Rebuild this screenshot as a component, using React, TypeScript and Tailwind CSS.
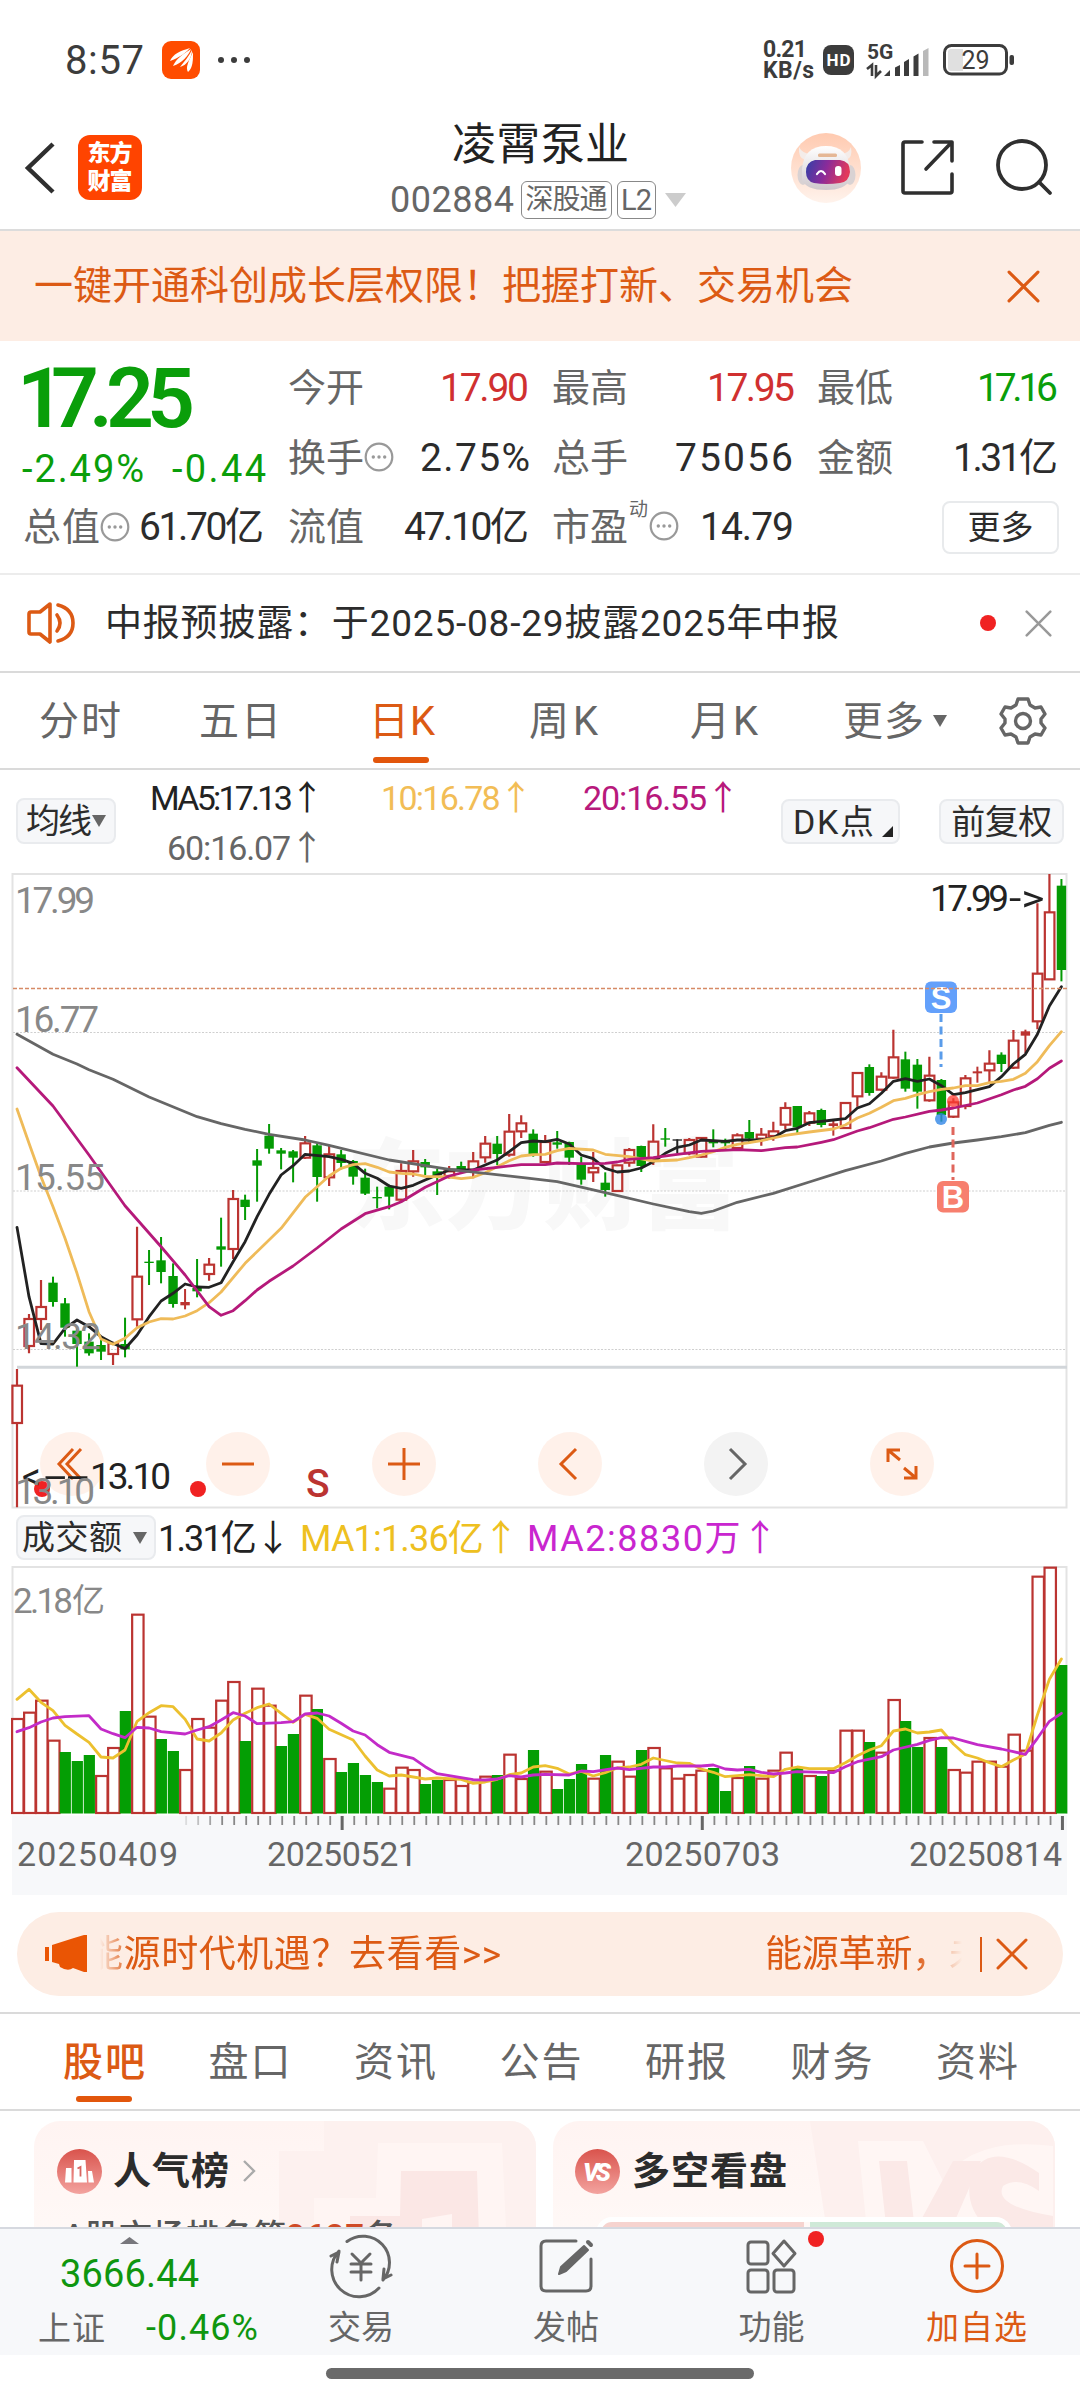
import { useLayoutEffect, useRef, type ReactNode } from "react";

/* ---------- shared helpers ---------- */

/** Single line of text whose tracking is adjusted so that it fills its box. */
function Fit({ className = "", children }: { className?: string; children: string }) {
  const box = useRef<HTMLSpanElement>(null);
  const inner = useRef<HTMLSpanElement>(null);
  useLayoutEffect(() => {
    if (!box.current || !inner.current) return;
    inner.current.style.letterSpacing = "0px";
    const natural = inner.current.getBoundingClientRect().width;
    const target = box.current.getBoundingClientRect().width;
    const gaps = Math.max(1, Array.from(children).length - 1);
    inner.current.style.letterSpacing = `${(target - natural) / gaps}px`;
  }, [children]);
  return (
    <span ref={box} className={`block shrink-0 whitespace-nowrap leading-none ${className}`}>
      <span ref={inner}>{children}</span>
    </span>
  );
}

function Cross({ className = "" }: { className?: string }) {
  return (
    <svg viewBox="0 0 32 32" fill="none" stroke="currentColor" strokeWidth="3" strokeLinecap="round" className={`shrink-0 ${className}`}>
      <path d="M2 2 30 30M30 2 2 30" />
    </svg>
  );
}

function InfoDot({ className = "" }: { className?: string }) {
  return (
    <svg viewBox="0 0 30 30" className={`h-[30px] w-[30px] shrink-0 ${className}`}>
      <circle cx="15" cy="15" r="13.3" fill="none" stroke="#999" strokeWidth="2.2" />
      <circle cx="9.3" cy="15" r="1.7" fill="#999" />
      <circle cx="15" cy="15" r="1.7" fill="#999" />
      <circle cx="20.7" cy="15" r="1.7" fill="#999" />
    </svg>
  );
}

function Caret({ className = "" }: { className?: string }) {
  return (
    <svg viewBox="0 0 14 12" preserveAspectRatio="none" fill="currentColor" className={`h-3 w-3.5 shrink-0 ${className}`}>
      <path d="M0 0H14L7 12Z" />
    </svg>
  );
}

/* ---------- status bar and title bar ---------- */

function StatusBar() {
  return (
    <div className="flex h-[120px] items-center text-[#3c3c3c]">
      <Fit className="ml-[65px] mt-0.5 w-[79px] text-[40px]">8:57</Fit>
      <svg viewBox="0 0 38 38" className="ml-[18px] h-[38px] w-[38px]">
        <rect width="38" height="38" rx="9" fill="#ff4c00" />
        <path d="M8 20C11 13 18 10 28 7C25 11 17 17 8 20Z" fill="#fff" />
        <path d="M11 25C14 18 21 13 29 8C27 14 20 22 11 25Z" fill="#fff" />
        <path d="M18 26C22 21 27 15 30 9C30 17 25 24 18 26Z" fill="#fff" />
        <path d="M26 31C23 27 27 19 31 11C31 19 31 27 26 31Z" fill="#fff" />
      </svg>
      <svg viewBox="0 0 34 8" className="ml-[17px] h-2 w-[34px]" fill="#3c3c3c">
        <circle cx="4" cy="4" r="3" />
        <circle cx="17" cy="4" r="3" />
        <circle cx="30" cy="4" r="3" />
      </svg>
      <div className="ml-[512px] flex flex-col">
        <Fit className="w-[44px] text-[23px] font-bold">0.21</Fit>
        <Fit className="-mt-0.5 w-[51px] text-[23px] font-bold">KB/s</Fit>
      </div>
      <div className="ml-[9px] flex h-[30px] w-[31px] items-center justify-center rounded-lg bg-[#3c3c3c] text-white">
        <Fit className="w-[24px] text-[17px] font-bold">HD</Fit>
      </div>
      <div className="ml-[12px] h-[36px] w-[64px]">
        <svg viewBox="0 0 64 36" className="h-[36px] w-[64px] overflow-visible">
          <text x="1" y="17" fontSize="21" fontWeight="700" fill="#3c3c3c">5G</text>
          <path d="M1 27L6 23V34M10 23V34L15 29" fill="none" stroke="#3c3c3c" strokeWidth="2.6" />
          <path d="M18 34L24 28V34Z" fill="#3c3c3c" />
          <path d="M29 34V25.5L34 23V34ZM38 34V20L43 17V34ZM47.500 34V14.500L52.500 11.500V34Z" fill="#3c3c3c" />
          <path d="M57 34V9L62.500 6V34Z" fill="#b9b9b9" />
        </svg>
      </div>
      <svg viewBox="0 0 72 32" className="ml-[13px] h-[32px] w-[72px]">
        <rect x="1.500" y="1.500" width="62" height="28.500" rx="7" fill="#fff" stroke="#3c3c3c" strokeWidth="3" />
        <path d="M8 5H20V27H8Q5 27 5 24V8Q5 5 8 5Z" fill="#e0e0e0" />
        <rect x="66.500" y="11" width="4.500" height="10" rx="2" fill="#3c3c3c" />
        <text x="32.500" y="25" textAnchor="middle" fontSize="25" fill="#3c3c3c">29</text>
      </svg>
    </div>
  );
}

function Robot() {
  return (
    <svg viewBox="0 0 72 72" className="h-[72px] w-[72px] shrink-0">
      <defs>
        <linearGradient id="halo" x1="0" y1="0" x2="0" y2="1">
          <stop offset="0" stopColor="#ffcab0" />
          <stop offset="1" stopColor="#fff3ec" />
        </linearGradient>
        <linearGradient id="visor" x1="0" y1="0" x2="1" y2="0.2">
          <stop offset="0" stopColor="#3240a8" />
          <stop offset="0.5" stopColor="#8a2b9a" />
          <stop offset="1" stopColor="#e23a5c" />
        </linearGradient>
        <linearGradient id="shell" x1="0" y1="0" x2="0" y2="1">
          <stop offset="0" stopColor="#ffffff" />
          <stop offset="1" stopColor="#cfc8cc" />
        </linearGradient>
      </defs>
      <circle cx="36" cy="36" r="35" fill="url(#halo)" />
      <path d="M9 15Q8 26 15 28L20 22Q12 21 9 15ZM61 15Q63 26 56 28L51 22Q59 21 61 15Z" fill="#f4ece9" />
      <ellipse cx="13" cy="43" rx="5.500" ry="10" fill="#d9d2d3" />
      <ellipse cx="60" cy="43" rx="5.500" ry="10" fill="#d9d2d3" />
      <path d="M12 37Q14 14 36 14Q58 14 60 37V48Q55 58 36 58Q16 58 12 48Z" fill="url(#shell)" />
      <rect x="28" y="21.500" width="19" height="3.500" rx="1.500" fill="#e5b795" />
      <path d="M25 28H50Q60 29 60 40Q59 50 50 51Q36 53 24 51Q16 49 16 40Q16 30 25 28Z" fill="url(#visor)" />
      <path d="M27 42Q31 36 35 42" fill="none" stroke="#fff" strokeWidth="2.200" strokeLinecap="round" />
      <rect x="45" y="34" width="6.500" height="10" rx="3" fill="#fff" />
    </svg>
  );
}

function TitleBar() {
  return (
    <header className="flex h-[111px] items-start border-b-2 border-[#dcdcdc]">
      <svg viewBox="0 0 32 52" className="ml-[24px] mt-[22px] h-[52px] w-[32px]" fill="none" stroke="#2f2f2f" strokeWidth="4.500">
        <path d="M29 2 4 26 29 50" />
      </svg>
      <div className="ml-[22px] mt-[15px] flex h-[65px] w-[64px] flex-col items-center justify-center rounded-xl bg-[#ff4400] text-white">
        <Fit className="w-[45px] text-[23px] font-black">东方</Fit>
        <Fit className="mt-[5px] w-[45px] text-[23px] font-black">财富</Fit>
      </div>
      <div className="ml-[246px] w-[305px]">
        <Fit className="ml-[64px] mt-[3px] w-[177px] text-[44px] text-[#222]">凌霄泵业</Fit>
        <div className="mt-[14px] flex h-[38px] items-center text-[#666]">
          <Fit className="ml-0.5 w-[124px] text-[36px]">002884</Fit>
          <div className="ml-[7px] flex h-[38px] w-[91px] items-center justify-center rounded-md border-[1.500px] border-[#888]">
            <Fit className="w-[82px] text-[28px]">深股通</Fit>
          </div>
          <div className="ml-[5px] flex h-[38px] w-[39px] items-center justify-center rounded-md border-[1.500px] border-[#888]">
            <Fit className="w-[31px] text-[29px]">L2</Fit>
          </div>
          <Caret className="ml-[9px] h-[14px] w-[21px] text-[#ccc]" />
        </div>
      </div>
      <div className="ml-[97px] mt-[12px]">
        <Robot />
      </div>
      <svg viewBox="0 0 56 56" className="ml-[38px] mt-[19px] h-[56px] w-[56px]" fill="none" stroke="#2f2f2f" strokeWidth="3.600" strokeLinecap="round" strokeLinejoin="round">
        <path d="M22 3H5Q3 3 3 5V52Q3 54 5 54H50Q52 54 52 52V35M34 3H52V22M51 4 26 30" />
      </svg>
      <svg viewBox="0 0 58 58" className="ml-[39px] mt-[18px] h-[58px] w-[58px]" fill="none" stroke="#2f2f2f" strokeWidth="3.800" strokeLinecap="round">
        <circle cx="27" cy="27" r="24" />
        <path d="M44 44 55 55" />
      </svg>
    </header>
  );
}

function Banner() {
  return (
    <div className="flex h-[110px] items-center bg-[#fdede4] text-[#dc5a14]">
      <Fit className="ml-[34px] w-[819px] text-[39px]">一键开通科创成长层权限！把握打新、交易机会</Fit>
      <Cross className="ml-[154px] h-[33px] w-[33px]" />
    </div>
  );
}

/* ---------- quote summary ---------- */

const label = "text-[38px] text-[#666]";
const num = "text-[39px]";

function QuotePanel() {
  return (
    <section className="flex h-[234px] border-b-2 border-[#ececec] text-[#2c2c2c]">
      <div className="w-[264px]">
        <div className="mt-[16px] flex text-[84px] font-semibold text-[#0a9e0a]">
          <Fit className="ml-[17px] w-[82px]">17</Fit>
          <Fit className="-ml-[10px] w-[24px]">.</Fit>
          <Fit className="-ml-[7px] w-[89px]">25</Fit>
        </div>
        <div className="mt-[9px] flex text-[#0a9e0a]">
          <Fit className="ml-[22px] w-[122px] text-[38px]">-2.49%</Fit>
          <Fit className="ml-[28px] w-[94px] text-[38px]">-0.44</Fit>
        </div>
        <div className="mt-[19px] flex h-[40px] items-center">
          <Fit className={`ml-[23px] w-[77px] ${label}`}>总值</Fit>
          <InfoDot />
          <Fit className={`ml-[9px] w-[125px] ${num}`}>61.70亿</Fit>
        </div>
      </div>
      <div className="w-[816px]">
        <div className="mt-[12px] flex h-[70px] items-center">
          <Fit className={`ml-[24px] w-[76px] ${label}`}>今开</Fit>
          <Fit className={`ml-[76px] w-[89px] text-[#d03030] ${num}`}>17.90</Fit>
          <Fit className={`ml-[23px] w-[76px] ${label}`}>最高</Fit>
          <Fit className={`ml-[79px] w-[88px] text-[#d03030] ${num}`}>17.95</Fit>
          <Fit className={`ml-[22px] w-[76px] ${label}`}>最低</Fit>
          <Fit className={`ml-[84px] w-[81px] text-[#0a9e0a] ${num}`}>17.16</Fit>
        </div>
        <div className="flex h-[70px] items-center">
          <Fit className={`ml-[24px] w-[76px] ${label}`}>换手</Fit>
          <InfoDot className="-mt-0.5" />
          <Fit className={`ml-[26px] w-[110px] ${num}`}>2.75%</Fit>
          <Fit className={`ml-[22px] w-[76px] ${label}`}>总手</Fit>
          <Fit className={`ml-[47px] w-[118px] ${num}`}>75056</Fit>
          <Fit className={`ml-[24px] w-[76px] ${label}`}>金额</Fit>
          <Fit className={`ml-[60px] w-[105px] ${num}`}>1.31亿</Fit>
        </div>
        <div className="-mt-px flex h-[70px] items-center">
          <Fit className={`ml-[24px] w-[76px] ${label}`}>流值</Fit>
          <Fit className={`ml-[40px] w-[125px] ${num}`}>47.10亿</Fit>
          <Fit className={`ml-[23px] w-[76px] ${label}`}>市盈</Fit>
          <Fit className="mb-[36px] ml-px w-[20px] text-[19px] text-[#666]">动</Fit>
          <InfoDot className="-mt-0.5" />
          <Fit className={`ml-[21px] w-[94px] ${num}`}>14.79</Fit>
          <button className="ml-[148px] flex h-[53px] w-[117px] items-center justify-center rounded-lg border-2 border-[#e8eaec]">
            <Fit className="w-[66px] text-[33px]">更多</Fit>
          </button>
        </div>
      </div>
    </section>
  );
}

function NoticeRow() {
  return (
    <div className="flex h-[98px] items-center border-b-2 border-[#dadada] text-[#2c2c2c]">
      <svg viewBox="0 0 50 44" className="ml-[26px] h-[44px] w-[50px]" fill="none" stroke="#dc5a14" strokeWidth="3.600" strokeLinejoin="round" strokeLinecap="round">
        <path d="M24 3 14 11H5Q3 11 3 13V31Q3 33 5 33H14L24 41Z" />
        <path d="M31 14Q37 22 31 30M32 4Q47 8 47 22Q47 36 32 40" />
      </svg>
      <Fit className="ml-[29px] w-[734px] text-[37px]">中报预披露：于2025-08-29披露2025年中报</Fit>
      <span className="ml-[141px] h-4 w-4 rounded-full bg-[#f02222]" />
      <Cross className="ml-[29px] h-[27px] w-[27px] text-[#999]" />
    </div>
  );
}

function PeriodTabs() {
  return (
    <nav className="flex h-[97px] items-center border-b-2 border-[#dadada] text-[40px] text-[#666]">
      <Fit className="ml-[39px] mt-0.5 w-[82px]">分时</Fit>
      <Fit className="ml-[78px] mt-0.5 w-[82px]">五日</Fit>
      <div className="ml-[88px] flex h-full flex-col justify-between text-[#dc5a14]">
        <Fit className="mt-[29px] w-[66px]">日K</Fit>
        <span className="mb-[5px] ml-1 h-1.5 w-[56px] rounded-full bg-[#e2560c]" />
      </div>
      <Fit className="ml-[94px] mt-0.5 w-[69px]">周K</Fit>
      <Fit className="ml-[92px] mt-0.5 w-[68px]">月K</Fit>
      <Fit className="ml-[85px] mt-0.5 w-[81px]">更多</Fit>
      <Caret className="ml-[9px]" />
      <svg viewBox="0 0 48 48" className="ml-[52px] h-[48px] w-[48px]" fill="none" stroke="#666" strokeWidth="3.400" strokeLinejoin="round">
        <path d="M19 2H29L31 8L36 11L42 10L46 17L42 22V26L46 31L42 38L36 37L31 40L29 46H19L17 40L12 37L6 38L2 31L6 26V22L2 17L6 10L12 11L17 8Z" />
        <circle cx="24" cy="24" r="7.500" />
      </svg>
    </nav>
  );
}

/* ---------- chart data ---------- */

const STEP = 12.005;
const X0 = 17;
const px = (i: number) => X0 + i * STEP;

// kind: r = hollow up, g = solid down, R = solid up (flat body), k = unchanged
type Candle = [kind: string, high: number, top: number, bottom: number, low: number];
const candles: Candle[] = [
  ["r", 1527, 1577, 1689, 1942], ["r", 1362, 1377, 1458, 1480], ["r", 1260, 1341, 1377, 1410], ["g", 1250, 1268, 1326, 1340],
  ["g", 1314, 1330, 1403, 1430], ["g", 1400, 1412, 1452, 1520], ["g", 1420, 1445, 1480, 1487], ["g", 1440, 1455, 1475, 1500],
  ["r", 1445, 1450, 1482, 1515], ["g", 1373, 1452, 1468, 1492], ["r", 1100, 1250, 1378, 1400], ["g", 1170, 1205, 1209, 1275],
  ["g", 1131, 1201, 1236, 1270], ["g", 1210, 1248, 1332, 1343], ["R", 1287, 1326, 1336, 1348], ["g", 1197, 1284, 1294, 1312],
  ["r", 1194, 1214, 1242, 1262], ["g", 1073, 1159, 1169, 1220], ["r", 990, 1017, 1167, 1197], ["g", 1004, 1019, 1041, 1080],
  ["g", 867, 901, 917, 1025], ["g", 792, 827, 866, 881], ["g", 864, 871, 881, 928], ["g", 870, 874, 893, 967],
  ["r", 828, 850, 893, 897], ["g", 850, 856, 951, 1025], ["r", 857, 883, 952, 978], ["g", 870, 883, 909, 928],
  ["g", 900, 903, 950, 974], ["g", 926, 953, 1001, 1005], ["g", 980, 1011, 1015, 1045], ["g", 974, 980, 1010, 1048],
  ["r", 910, 933, 1019, 1022], ["r", 870, 904, 934, 950], ["g", 897, 906, 922, 945], ["g", 926, 934, 946, 1005],
  ["r", 918, 934, 948, 956], ["g", 905, 918, 932, 936], ["r", 876, 904, 930, 955], ["r", 828, 851, 892, 908],
  ["g", 828, 851, 882, 915], ["r", 762, 815, 884, 890], ["r", 766, 790, 814, 834], ["g", 808, 821, 885, 890],
  ["r", 825, 846, 906, 910], ["g", 813, 847, 854, 866], ["g", 845, 846, 893, 915], ["g", 890, 912, 959, 974],
  ["r", 876, 924, 937, 966], ["g", 937, 968, 990, 1010], ["r", 914, 916, 993, 995], ["r", 864, 870, 908, 920],
  ["g", 857, 858, 918, 936], ["r", 793, 845, 895, 915], ["g", 804, 835, 839, 860], ["k", 838, 838, 842, 880],
  ["r", 834, 840, 880, 886], ["r", 832, 834, 890, 893], ["g", 808, 843, 850, 862], ["g", 836, 843, 850, 867],
  ["r", 820, 826, 864, 867], ["g", 780, 816, 836, 850], ["r", 804, 824, 836, 857], ["r", 785, 814, 828, 842],
  ["r", 727, 744, 794, 808], ["g", 738, 738, 802, 825], ["r", 753, 760, 788, 798], ["g", 746, 750, 795, 802],
  ["R", 780, 790, 798, 827], ["r", 727, 729, 804, 807], ["r", 637, 639, 709, 740], ["g", 613, 621, 699, 707],
  ["r", 637, 650, 689, 692], ["r", 509, 592, 653, 656], ["g", 575, 598, 686, 695], ["g", 597, 614, 695, 746],
  ["r", 590, 647, 721, 725], ["g", 657, 660, 765, 785], ["r", 715, 727, 770, 774], ["r", 645, 655, 738, 748],
  ["R", 620, 634, 640, 668], ["r", 571, 611, 631, 672], ["g", 577, 584, 612, 636], ["r", 510, 542, 623, 627],
  ["R", 509, 514, 527, 580], ["r", 130, 341, 484, 508], ["r", 42, 157, 358, 360], ["g", 57, 77, 330, 364],
];

type Pt = [i: number, v: number];
const ma5: Pt[] = [[0,1102],[1,1310],[2,1451],[3,1452],[4,1405],[5,1380],[6,1400],[7,1430],[8,1450],[9,1466],[10,1425],[11,1370],[12,1323],[13,1300],[14,1272],[15,1281],[16,1282],[17,1268],[18,1205],[19,1145],[20,1070],[21,1003],[22,945],[23,917],[24,883],[26,890],[27,898],[28,910],[29,940],[30,955],[31,978],[32,985],[33,976],[34,960],[35,945],[36,930],[38,930],[39,915],[40,900],[41,875],[42,848],[43,843],[44,845],[45,838],[46,852],[47,885],[48,896],[49,925],[50,936],[51,933],[52,924],[53,905],[54,880],[55,862],[56,855],[57,840],[59,844],[60,840],[62,840],[63,833],[64,812],[65,805],[66,788],[67,784],[68,780],[69,776],[70,744],[71,731],[72,700],[73,664],[74,656],[75,664],[76,657],[77,677],[78,704],[79,698],[80,689],[81,680],[82,650],[83,612],[84,583],[85,523],[86,438],[87,380]];
const ma10: Pt[] = [[0,747],[1,850],[2,950],[3,1040],[4,1135],[5,1240],[6,1355],[7,1437],[8,1453],[9,1435],[10,1403],[11,1386],[12,1376],[13,1377],[14,1368],[15,1352],[16,1328],[17,1296],[19,1210],[22,1105],[24,1012],[25,980],[26,948],[27,925],[28,914],[29,911],[30,922],[31,936],[32,940],[33,942],[34,949],[36,951],[37,956],[38,952],[39,938],[40,920],[41,902],[42,888],[43,884],[44,883],[45,872],[46,865],[48,870],[49,883],[51,890],[53,903],[55,900],[56,893],[57,885],[58,875],[59,862],[60,853],[61,848],[62,842],[63,834],[64,826],[66,816],[68,807],[69,795],[70,774],[71,760],[72,742],[73,722],[74,715],[75,704],[76,695],[77,688],[78,684],[79,677],[80,677],[81,668],[82,664],[83,658],[84,640],[85,605],[86,557],[87,515]];
const ma20: Pt[] = [[0,623],[3,738],[6,885],[9,1037],[12,1160],[14,1245],[16,1340],[17,1366],[18,1352],[19,1322],[20,1290],[21,1264],[23,1218],[25,1164],[27,1107],[29,1061],[31,1040],[32,1025],[34,982],[36,948],[38,930],[40,922],[42,914],[44,914],[45,909],[47,911],[49,910],[50,906],[51,898],[53,893],[55,883],[57,874],[60,869],[62,872],[64,863],[65,861],[67,847],[68,839],[70,813],[71,803],[73,778],[74,771],[76,754],[77,750],[78,744],[80,729],[82,704],[83,690],[84,679],[85,656],[86,625],[87,603]];
const ma60: Pt[] = [[0,523],[3,583],[5,612],[6,629],[8,658],[11,711],[15,770],[17,791],[19,808],[21,823],[24,840],[26,856],[31,900],[36,928],[39,940],[42,952],[45,965],[49,998],[53,1032],[56,1055],[57,1060],[58,1053],[60,1027],[63,1000],[66,966],[69,932],[72,903],[74,880],[76,861],[78,849],[80,840],[82,830],[84,818],[86,796],[87,787]];

const volumes: [up: 0 | 1, top: number][] = [
  [1,507],[1,488],[1,452],[1,572],[0,606],[0,633],[0,615],[1,678],[1,594],[0,483],[1,194],[1,500],[0,567],[0,603],[1,660],[1,507],[1,533],[1,452],[1,396],[0,573],[1,416],[1,467],[0,588],[0,552],[1,437],[0,477],[1,627],[0,666],[0,639],[0,675],[0,696],[1,716],[1,653],[1,660],[0,702],[0,690],[1,690],[1,708],[1,698],[1,680],[0,675],[1,614],[1,687],[0,600],
  [1,665],[0,717],[0,687],[0,642],[1,686],[0,615],[1,635],[1,680],[0,600],[1,594],[1,655],[1,686],[1,675],[1,662],[0,654],[0,723],[1,684],[0,648],[1,686],[1,662],[1,608],[0,654],[1,678],[0,678],[1,662],[1,542],[1,542],[0,576],[1,608],[1,450],[0,513],[0,591],[1,564],[0,591],[1,660],[1,668],[1,635],[1,635],[1,650],[1,554],[1,602],[1,80],[1,53],[0,345],
];
const vma1: Pt[] = [[0,448],[1,418],[2,457],[3,482],[4,526],[5,552],[6,577],[7,621],[8,624],[9,600],[10,514],[11,488],[12,467],[13,470],[14,508],[15,567],[16,573],[17,549],[18,510],[19,490],[20,473],[21,462],[22,490],[23,517],[24,493],[25,505],[26,538],[28,570],[29,618],[30,660],[31,678],[32,675],[34,687],[35,684],[37,688],[38,700],[39,696],[40,688],[41,674],[42,669],[43,651],[44,647],[45,655],[46,672],[47,664],[48,678],[49,668],[50,654],[51,651],[52,643],[53,624],[55,639],[56,640],[57,657],[58,667],[59,680],[61,674],[63,680],[64,658],[65,651],[66,656],[68,656],[69,638],[70,617],[71,600],[72,587],[73,543],[74,537],[75,549],[76,546],[77,540],[78,582],[79,614],[80,624],[81,638],[82,650],[83,630],[84,612],[85,495],[86,388],[87,327]];
const vma2: Pt[] = [[0,545],[1,533],[2,516],[3,504],[4,500],[6,497],[7,537],[8,551],[9,563],[10,532],[11,534],[12,545],[14,552],[15,540],[16,530],[17,510],[18,488],[19,498],[20,521],[22,518],[23,515],[24,492],[25,489],[26,498],[27,520],[28,543],[29,555],[30,584],[31,607],[32,616],[33,625],[34,650],[35,671],[36,677],[38,689],[39,690],[40,687],[41,677],[42,681],[43,675],[44,673],[46,675],[47,663],[48,665],[50,654],[51,659],[53,651],[54,651],[55,648],[57,648],[58,645],[59,657],[60,660],[61,658],[62,667],[63,672],[64,669],[65,665],[68,668],[69,650],[70,635],[72,620],[73,600],[75,583],[76,571],[77,563],[78,564],[79,574],[80,584],[82,597],[83,605],[84,613],[85,565],[86,514],[87,490]];

const toPoints = (pts: Pt[]) => pts.map(([i, v]) => `${px(i).toFixed(1)},${(v / 3).toFixed(1)}`).join(" ");

const RED = "#bb3431";
const GREEN = "#049a04";

/* ---------- K-line chart ---------- */

function Chip({ className = "", children }: { className?: string; children: ReactNode }) {
  return (
    <button className={`flex shrink-0 items-center rounded-lg border-2 border-[#e9ebee] bg-[#f6f7f9] text-[#2c2c2c] ${className}`}>
      {children}
    </button>
  );
}

function MaRow() {
  return (
    <div className="flex h-[103px] items-start text-[34px] text-[#222]">
      <Chip className="ml-[16px] mt-[28px] h-[46px] w-[100px] pl-[7px]">
        <Fit className="w-[66px]">均线</Fit>
        <Caret className="ml-[1px] text-[#666]" />
      </Chip>
      <div className="ml-[34px] mt-[11px]">
        <div className="flex">
          <Fit className="w-[174px]">MA5:17.13↑</Fit>
          <Fit className="ml-[57px] w-[152px] text-[#f2bd56]">10:16.78↑</Fit>
          <Fit className="ml-[50px] w-[157px] text-[#b8197c]">20:16.55↑</Fit>
        </div>
        <Fit className="ml-[17px] mt-[16px] w-[157px] text-[#666]">60:16.07↑</Fit>
      </div>
      <Chip className="ml-[41px] mt-[29px] h-[45px] w-[119px] pl-[10px]">
        <Fit className="w-[81px]">DK点</Fit>
        <svg viewBox="0 0 12 12" className="ml-[8px] mt-[20px] h-[11px] w-[11px]">
          <path d="M12 0V12H0Z" fill="#222" />
        </svg>
      </Chip>
      <Chip className="ml-[39px] mt-[29px] h-[45px] w-[125px] justify-center">
        <Fit className="w-[101px]">前复权</Fit>
      </Chip>
    </div>
  );
}

function CandleShape({ i, c }: { i: number; c: Candle }) {
  const [kind, h, t, b, l] = c;
  const x = px(i);
  if (kind === "r") {
    return (
      <g stroke={RED} strokeWidth="2.200" fill="none">
        <path d={`M${x} ${h / 3}V${t / 3}M${x} ${b / 3}V${l / 3}`} />
        <rect x={x - 4.6} y={t / 3} width="9.6" height={Math.max(2, (b - t) / 3)} />
      </g>
    );
  }
  const color = kind === "g" ? GREEN : kind === "R" ? RED : "#222";
  return (
    <g fill={color}>
      <rect x={x - 1} y={h / 3} width="2" height={(l - h) / 3} />
      <rect x={x - 4.7} y={t / 3} width="9.400" height={(b - t) / 3} />
    </g>
  );
}

function RoundButton({ muted = false, className, d }: { muted?: boolean; className: string; d: string }) {
  return (
    <button className={`flex h-16 w-16 shrink-0 items-center justify-center rounded-full ${muted ? "bg-[#f3f3f3]" : "bg-[#fff0e8]/90"} ${className}`}>
      <svg viewBox="0 0 36 36" className="h-9 w-9" fill="none" stroke={muted ? "#666" : "#dc5a14"} strokeWidth="3">
        <path d={d} />
      </svg>
    </button>
  );
}

function KChart() {
  const axis = "absolute text-[37px] text-[#888]";
  return (
    <div className="relative h-[636px]">
      <svg viewBox="0 13 1080 636" className="block h-[636px] w-[1080px]">
        <text x="347" y="361" fontSize="98" fontWeight="900" fill="#f8f8f8" textLength="392">东方财富</text>
        <path d="M12.500 14V647.500H1066.500V14Z" fill="none" stroke="#e3e3e3" strokeWidth="2" />
        <path d="M13 172.500H1066M13 331H1066M13 489.500H1066" stroke="#cfcfcf" strokeWidth="1" strokeDasharray="2 1.500" />
        <path d="M17 507.300H1067" stroke="#d2d6da" strokeWidth="3" />
        {candles.map((c, i) => (
          <CandleShape key={i} i={i} c={c} />
        ))}
        <g fill="none" strokeWidth="2.800" strokeLinejoin="round" strokeLinecap="round">
          <polyline points={toPoints(ma5)} stroke="#222" />
          <polyline points={toPoints(ma10)} stroke="#efbb59" />
          <polyline points={toPoints(ma20)} stroke="#b5197a" />
          <polyline points={toPoints(ma60)} stroke="#666" />
        </g>
        <path d="M941 154V207" stroke="#5a9cea" strokeWidth="3" strokeDasharray="8 4.500" />
        <path d="M953 267V320" stroke="#e0665c" strokeWidth="3" strokeDasharray="8 4.500" />
        <circle cx="941" cy="259" r="6" fill="#2f86e6" fillOpacity="0.8" />
        <circle cx="953" cy="241" r="6" fill="#ff3b30" fillOpacity="0.75" />
        <rect x="925" y="121.500" width="32" height="31.500" rx="6" fill="#63a0fb" />
        <rect x="937" y="321" width="32" height="31.500" rx="6" fill="#f77f6e" />
        <g fontFamily="Liberation Sans" fontWeight="700" fontSize="31" fill="#fff" textAnchor="middle">
          <text x="941" y="148.500">S</text>
          <text x="953" y="348">B</text>
        </g>
        <path d="M13 128.500H1067" stroke="#d68a66" strokeWidth="1.400" strokeDasharray="4 2" />
      </svg>

      <div className="absolute left-[930px] top-[7px] flex text-[37px] leading-none text-[#222]">
        <Fit className="w-[79px]">17.99</Fit>
        <span className="origin-left scale-x-[1.2]">{"->"}</span>
      </div>
      <Fit className={`${axis} left-[15px] top-[9px] w-[80px]`}>17.99</Fit>
      <Fit className={`${axis} left-[15px] top-[128px] w-[84px]`}>16.77</Fit>
      <Fit className={`${axis} left-[15px] top-[286px] w-[90px]`}>15.55</Fit>
      <Fit className={`${axis} left-[15px] top-[445px] w-[86px]`}>14.32</Fit>

      <div className="absolute left-0 top-[559px] flex">
        <RoundButton className="ml-[40px]" d="M19 3 5 18 19 33M27 3 13 18 27 33" />
        <RoundButton className="ml-[102px]" d="M2 18H34" />
        <RoundButton className="ml-[102px]" d="M2 18H34M18 2V34" />
        <RoundButton className="ml-[102px]" d="M24 3 9 18 24 33" />
        <RoundButton className="ml-[102px]" muted d="M12 3 27 18 12 33" />
        <RoundButton className="ml-[102px]" d="M4 16V4H16M4 4 16 14M32 20V32H20M32 32 20 22" />
      </div>
      <span className="absolute left-[34px] top-[608px] h-4 w-4 rounded-full bg-[#f02222]" />
      <span className="absolute left-[190px] top-[608px] h-4 w-4 rounded-full bg-[#f02222]" />
      <div className="absolute left-[22px] top-[585px] flex text-[37px] leading-none text-[#222]">
        <span className="w-[22px]">{"<"}</span>
        <span className="w-[46px]">
          <span className="inline-block origin-left scale-x-[2.2]">--</span>
        </span>
        <Fit className="w-[81px]">13.10</Fit>
      </div>
      <Fit className={`${axis} left-[15px] top-[600px] w-[80px]`}>13.10</Fit>
      <Fit className="absolute left-[306px] top-[592px] w-[24px] text-[39px] font-medium text-[#bb3431]">S</Fit>
    </div>
  );
}

/* ---------- turnover chart ---------- */

function VolumeRow() {
  return (
    <div className="flex h-[57px] items-center text-[36px] text-[#222]">
      <Chip className="ml-[16px] h-[45px] w-[140px] pl-[4px]">
        <Fit className="w-[100px] text-[33px]">成交额</Fit>
        <Caret className="ml-[11px] text-[#666]" />
      </Chip>
      <Fit className="ml-0.5 mt-0.5 w-[133px]">1.31亿↓</Fit>
      <Fit className="ml-[9px] mt-0.5 w-[219px] text-[#eec020]">MA1:1.36亿↑</Fit>
      <Fit className="ml-[8px] mt-0.5 w-[251px] text-[#c926cf]">MA2:8830万↑</Fit>
    </div>
  );
}

function VolumeChart() {
  return (
    <div className="relative h-[329px]">
      <svg viewBox="0 16 1080 329" className="block h-[329px] w-[1080px]">
        <path d="M12.500 264V17H1066.500V264" fill="none" stroke="#e3e3e3" strokeWidth="2" />
        <rect x="12" y="265.500" width="1055" height="79.500" fill="#f7f8fa" />
        {volumes.map(([up, t], i) =>
          up ? (
            <rect key={i} x={px(i) - 4.9} y={t / 3} width="11.400" height={263 - t / 3} fill="#fff" stroke={RED} strokeWidth="2.200" />
          ) : (
            <rect key={i} x={px(i) - 5.3} y={t / 3} width="11.200" height={263.500 - t / 3} fill="#049e04" />
          ),
        )}
        <g fill="none" strokeWidth="2.800" strokeLinejoin="round" strokeLinecap="round">
          <polyline points={toPoints(vma1)} stroke="#ecc02f" />
          <polyline points={toPoints(vma2)} stroke="#c32bc8" />
        </g>
        {volumes.map((_, i) => {
          const major = i === 27 || i === 57 || i === 87;
          return (
            <rect
              key={i}
              x={px(i) + (major ? -0.5 : 0.2)}
              y="266"
              width={major ? 3 : 1.8}
              height={major ? 14 : 9}
              fill={major ? "#666" : "#888"}
              opacity={i < 14 ? 0 : i < 17 ? (i - 13) * 0.25 : 1}
            />
          );
        })}
      </svg>
      <div className="absolute left-[13px] top-[18px] flex text-[35px] text-[#888]">
        <Fit className="w-[60px]">2.18</Fit>
        <Fit className="-ml-px w-[33px] text-[33px]">亿</Fit>
      </div>
      <div className="absolute left-0 top-[271px] flex text-[34px] text-[#666]">
        <Fit className="ml-[17px] w-[161px]">20250409</Fit>
        <Fit className="ml-[89px] w-[150px]">20250521</Fit>
        <Fit className="ml-[208px] w-[155px]">20250703</Fit>
        <Fit className="ml-[129px] w-[153px]">20250814</Fit>
      </div>
    </div>
  );
}

/* ---------- promo, community tabs, cards ---------- */

function Promo() {
  return (
    <div className="h-[119px] border-b-2 border-[#dadada] px-[17px] pt-[17px]">
      <div className="flex h-[84px] items-center rounded-full bg-[#fdede4] text-[37px] text-[#dc5a14]">
        <svg viewBox="0 0 44 38" className="ml-[27px] h-[38px] w-[44px] shrink-0" fill="#ea5504">
          <path d="M1 12H5V26H1ZM8 10 30 3 40 0H43V37H40L29 33Q24 37 16 32L15 29 8 27Z" />
        </svg>
        <div className="relative ml-[12px] h-[44px] w-[870px] overflow-hidden [mask-image:linear-gradient(to_right,transparent,black_30px,black_815px,transparent_862px)]">
          <Fit className="absolute -left-[14px] top-[4px] w-[415px]">能源时代机遇？去看看&gt;&gt;</Fit>
          <Fit className="absolute left-[665px] top-[4px] w-[221px]">能源革新，未</Fit>
        </div>
        <span className="ml-[10px] h-[35px] w-[1.500px] bg-[#dc5a14]" />
        <Cross className="ml-[14px] h-[32px] w-[32px]" />
      </div>
    </div>
  );
}

const communityTabs = ["股吧", "盘口", "资讯", "公告", "研报", "财务", "资料"];

function CommunityTabs() {
  return (
    <nav className="flex h-[97px] gap-[63.500px] border-b-2 border-[#dadada] pl-[63px] text-[40px] text-[#666]">
      {communityTabs.map((t, i) => (
        <div key={t} className={`flex flex-col items-center ${i === 0 ? "text-[#dc5a14]" : ""}`}>
          <Fit className={`mt-[29px] w-[82px] ${i === 0 ? "font-medium" : ""}`}>{t}</Fit>
          {i === 0 && <span className="mt-[13px] h-1.5 w-[56px] rounded-full bg-[#e2560c]" />}
        </div>
      ))}
    </nav>
  );
}

function Cards() {
  return (
    <div className="flex h-[116px] gap-[17px] overflow-hidden pl-[34px] pt-[10px]">
      <div className="relative h-[150px] w-[502px] overflow-hidden rounded-[26px] bg-linear-to-b from-[#fff4f2] to-[#fffaf8]">
        <svg viewBox="0 0 502 150" className="absolute inset-0 h-[150px] w-[502px]">
          <path d="M290 0H502V150H245V30H290Z" fill="#fdf1ef" />
          <path d="M344 22H468L474 150H280V77H342Z" fill="#fff5f3" />
          <path d="M367 50H443L446 150H316V95H366Z" fill="#fbe7e5" />
          <path d="M388 98 418 93V150H402V106L388 110Z" fill="#fff5f3" />
        </svg>
        <div className="relative flex h-[100px] items-center pl-[23px]">
          <svg viewBox="0 0 45 45" className="h-[45px] w-[45px]">
            <defs>
              <linearGradient id="disc" x1="0" y1="0" x2="0" y2="1">
                <stop offset="0" stopColor="#d9534c" />
                <stop offset="1" stopColor="#f3a39f" />
              </linearGradient>
            </defs>
            <circle cx="22.500" cy="22.500" r="22.500" fill="url(#disc)" />
            <path d="M9 19H14.500V33.500H8ZM17 11H28.500L30 33.500H16.500ZM31 22H35L37 33.500H31.500Z" fill="#fff" />
            <path d="M20.500 19.500 23.500 18V27.500" fill="none" stroke="#d9645e" strokeWidth="1.800" />
          </svg>
          <Fit className="ml-[11px] w-[116px] text-[38px] font-semibold text-[#2c2c2c]">人气榜</Fit>
          <svg viewBox="0 0 14 24" className="ml-[13px] h-6 w-3.5" fill="none" stroke="#aaa" strokeWidth="2.400">
            <path d="M2 2 12 12 2 22" />
          </svg>
        </div>
        <div className="relative -mt-px flex pl-[29px] text-[33px] font-medium text-[#555]">
          <Fit className="w-[223px]">A股市场排名第</Fit>
          <Fit className="w-[78px] text-[#cf4a26]">2627</Fit>
          <Fit className="w-[33px]">名</Fit>
        </div>
      </div>
      <div className="relative h-[150px] w-[502px] overflow-hidden rounded-[26px] bg-linear-to-b from-[#fff4f2] to-[#fffaf8]">
        <svg viewBox="0 0 502 150" className="absolute inset-0 h-[150px] w-[502px]">
          <path d="M257 0H502V150H280Z" fill="#fdf0ee" />
          <path d="M305 20H370L390 60Q420 15 500 25V150H318Z" fill="#fff6f4" />
          <path d="M326 40H354L362 110 400 40H428L380 150H338Z" fill="#fbe9e7" />
          <path d="M486 52Q440 20 420 50Q405 90 450 120V150H500V95Q440 85 450 65Q465 55 486 70Z" fill="#fbe9e7" />
        </svg>
        <div className="relative flex h-[100px] items-center pl-[22px]">
          <svg viewBox="0 0 45 45" className="h-[45px] w-[45px]">
            <circle cx="22.500" cy="22.500" r="22.500" fill="url(#disc)" />
            <text x="22" y="31.500" textAnchor="middle" fontSize="25" fontStyle="italic" fontWeight="900" fill="#fff" textLength="28">VS</text>
          </svg>
          <Fit className="ml-[12px] w-[155px] text-[38px] font-semibold text-[#2c2c2c]">多空看盘</Fit>
        </div>
        <div className="relative mx-[43px] -mt-[4px] flex h-[30px] gap-1.5 overflow-hidden rounded-t-2xl border-[5px] border-b-0 border-white">
          <span className="w-[203px] bg-[#f6d3cf]" />
          <span className="flex-1 bg-[#cfe9d8]" />
        </div>
      </div>
    </div>
  );
}

/* ---------- bottom navigation ---------- */

function NavItem({ className = "", width, text, children }: { className?: string; width: string; text: string; children: ReactNode }) {
  return (
    <div className={`flex flex-col items-center pt-[8px] ${className}`}>
      <svg viewBox="0 0 64 58" className="h-[58px] w-[64px] overflow-visible" fill="none" stroke="currentColor" strokeWidth="3" strokeLinecap="round" strokeLinejoin="round">
        {children}
      </svg>
      <Fit className={`mt-[16px] text-[33px] ${width}`}>{text}</Fit>
    </div>
  );
}

function BottomNav() {
  return (
    <nav className="flex h-[128px] border-t-2 border-[#d6d9e0] bg-[#f7f8fa] text-[#666]">
      <div className="w-[260px]">
        <Caret className="ml-[120px] mt-[8px] h-[7px] w-[19px] rotate-180 text-[#77777c]" />
        <Fit className="ml-[60px] mt-[11px] w-[139px] text-[38px] text-[#0f960f]">3666.44</Fit>
        <div className="mt-[17px] flex items-center">
          <Fit className="ml-[38px] w-[67px] text-[33px]">上证</Fit>
          <Fit className="ml-[41px] w-[112px] text-[36px] text-[#0f960f]">-0.46%</Fit>
        </div>
      </div>
      <NavItem className="w-[202px]" width="w-[66px]" text="交易">
        <path d="M18 4.500A26.500 26.500 0 0 1 54 43M54 42 62 38M54 42 55 32M50 51A26.500 26.500 0 0 1 10 14M2 19 10 15 8 25" />
        <path d="M23 17 32 26 41 17M22 27H42M22 35H42M32 27V43" />
      </NavItem>
      <NavItem className="w-[208px]" width="w-[66px]" text="发帖">
        <path d="M42 4H12Q7 4 7 9V49Q7 54 12 54H52Q57 54 57 49V22" />
        <path d="M25 37 27 30 50 9 54 13 32 34Z" fill="currentColor" strokeWidth="2" />
        <path d="M54 5 57 8" strokeWidth="4" />
      </NavItem>
      <div className="relative">
        <NavItem className="w-[203px]" width="w-[66px]" text="功能">
          <rect x="8" y="5" width="20" height="22" rx="3" />
          <rect x="8" y="33" width="20" height="22" rx="3" />
          <rect x="34" y="33" width="20" height="22" rx="3" />
          <path d="M44 4 55 16.500 44 29 33 16.500Z" />
        </NavItem>
        <span className="absolute left-[138px] top-[2px] h-4 w-4 rounded-full bg-[#f02222]" />
      </div>
      <NavItem className="w-[207px] text-[#dc5a14]" width="w-[101px]" text="加自选">
        <circle cx="32" cy="29" r="25.500" />
        <path d="M20 29H44M32 17V41" />
      </NavItem>
    </nav>
  );
}

export default function App() {
  return (
    <div className="h-[2400px] w-[1080px] overflow-hidden bg-white font-['Roboto','Noto_Sans_CJK_SC',sans-serif]">
      <StatusBar />
      <TitleBar />
      <Banner />
      <QuotePanel />
      <NoticeRow />
      <PeriodTabs />
      <MaRow />
      <KChart />
      <VolumeRow />
      <VolumeChart />
      <Promo />
      <CommunityTabs />
      <Cards />
      <BottomNav />
      <div className="flex h-[44px] justify-center pt-[13px]">
        <span className="h-[11px] w-[428px] rounded-full bg-[#6a6a6a]" />
      </div>
    </div>
  );
}
